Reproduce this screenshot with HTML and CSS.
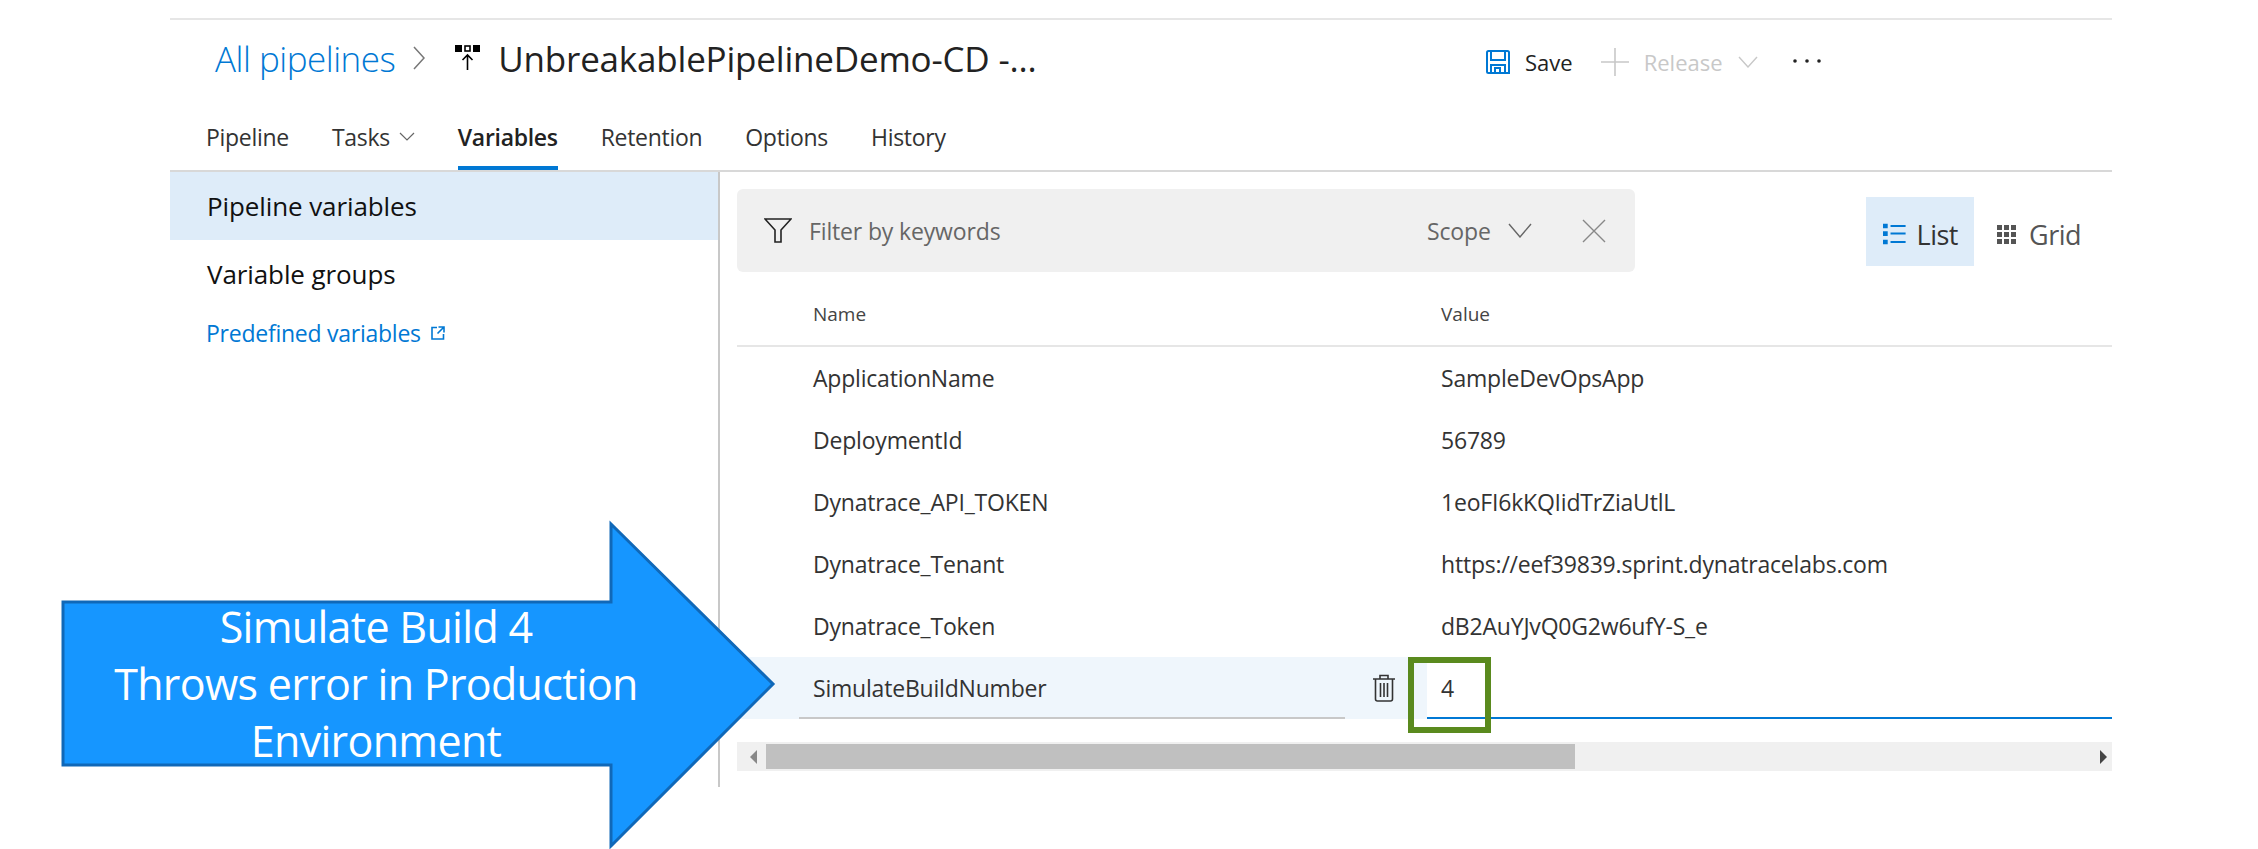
FILE: index.html
```html
<!DOCTYPE html>
<html lang="en">
<head>
    <meta charset="UTF-8">
    <title>UnbreakablePipelineDemo-CD - Variables</title>
    <link rel="stylesheet" href="styles.css">
</head>
<body>
    <div class="page">
        <header class="topbar">
            <div class="breadcrumb">
                <a class="crumb-link">All pipelines</a>
                <svg class="crumb-sep" width="12" height="24" viewBox="0 0 12 24"><path d="M1 1l10 11L1 23" fill="none" stroke="#777" stroke-width="1.5"/></svg>
                <svg class="pipe-icon" width="26" height="26" viewBox="0 0 26 26">
                    <rect x="0" y="0" width="7" height="7" fill="#000"/>
                    <rect x="10" y="1" width="5" height="5" fill="#fff" stroke="#000" stroke-width="1.6"/>
                    <rect x="18" y="0" width="7" height="7" fill="#000"/>
                    <path d="M12.5 25V10M7.5 15l5-5 5 5" fill="none" stroke="#000" stroke-width="1.6"/>
                </svg>
                <span class="crumb-title">UnbreakablePipelineDemo-CD -...</span>
            </div>
            <div class="actions">
                <button class="action">
                    <svg width="24" height="24" viewBox="0 0 24 24"><path d="M1 2.500A1.500 1.500 0 0 1 2.500 1h19A1.500 1.500 0 0 1 23 2.500V23H2.500A1.500 1.500 0 0 1 1 21.500zM5 1v9h14V1M5 23v-8h14v8M9 23v-5h5v5" fill="none" stroke="#0078d4" stroke-width="2"/></svg>
                    <span>Save</span>
                </button>
                <button class="action action-off">
                    <svg width="30" height="28" viewBox="0 0 30 28"><path d="M15 0v28M1 14h28" fill="none" stroke="#c8c8c8" stroke-width="1.6"/></svg>
                    <span>Release</span>
                    <svg class="chev" width="20" height="12" viewBox="0 0 20 12"><path d="M1 1l9 10 9-10" fill="none" stroke="#c8c8c8" stroke-width="1.4"/></svg>
                </button>
                <svg class="dots" width="28" height="4" viewBox="0 0 28 4"><circle cx="2" cy="2" r="1.800" fill="#222"/><circle cx="14" cy="2" r="1.800" fill="#222"/><circle cx="26" cy="2" r="1.800" fill="#222"/></svg>
            </div>
        </header>

        <nav class="tabs">
            <a class="tab">Pipeline</a>
            <a class="tab">Tasks
                <svg width="16" height="9" viewBox="0 0 16 9"><path d="M1 1l7 7 7-7" fill="none" stroke="#666" stroke-width="1.200"/></svg>
            </a>
            <a class="tab tab-active">Variables</a>
            <a class="tab">Retention</a>
            <a class="tab">Options</a>
            <a class="tab">History</a>
        </nav>

        <main class="content">
            <aside class="sidebar">
                <div class="side-item side-item-active">Pipeline variables</div>
                <div class="side-item">Variable groups</div>
                <a class="side-link">Predefined variables
                    <svg width="14" height="14" viewBox="0 0 14 14"><path d="M6 1.500H1v11.500h11.500V8M7.500 1h5.500v5.500M13 1L6.500 7.500" fill="none" stroke="#0078d4" stroke-width="1.600"/></svg>
                </a>
            </aside>

            <section class="panel">
                <div class="toolbar">
                    <div class="filter">
                        <svg class="filter-icon" width="28" height="25" viewBox="0 0 28 25"><path d="M1 1h26L17 12v12h-6V12z" fill="none" stroke="#222" stroke-width="1.600"/></svg>
                        <span class="filter-text">Filter by keywords</span>
                        <span class="filter-scope">Scope</span>
                        <svg class="filter-chev" width="24" height="15" viewBox="0 0 24 15"><path d="M1 1l11 13L23 1" fill="none" stroke="#666" stroke-width="1.400"/></svg>
                        <svg class="filter-x" width="24" height="24" viewBox="0 0 24 24"><path d="M1 1l22 22M23 1L1 23" fill="none" stroke="#888" stroke-width="1.400"/></svg>
                    </div>
                    <div class="views">
                        <button class="view view-active">
                            <svg width="24" height="22" viewBox="0 0 24 22">
                                <path d="M0 0h5v5H0zM0 8h5v5H0zM0 17h5v5H0z" fill="#0078d4"/>
                                <path d="M8 2.500h16M8 10.500h16M8 19.500h16" stroke="#0078d4" stroke-width="2"/>
                            </svg>
                            <span>List</span>
                        </button>
                        <button class="view">
                            <svg width="19" height="19" viewBox="0 0 19 19" fill="#555">
                                <path d="M0 0h5v5H0zM7 0h5v5H7zM14 0h5v5h-5zM0 7h5v5H0zM7 7h5v5H7zM14 7h5v5h-5zM0 14h5v5H0zM7 14h5v5H7zM14 14h5v5h-5z"/>
                            </svg>
                            <span>Grid</span>
                        </button>
                    </div>
                </div>

                <div class="grid-head">
                    <span class="col-name">Name</span>
                    <span>Value</span>
                </div>

                <div class="row"><span class="col-name">ApplicationName</span><span>SampleDevOpsApp</span></div>
                <div class="row"><span class="col-name">DeploymentId</span><span>56789</span></div>
                <div class="row"><span class="col-name">Dynatrace_API_TOKEN</span><span>1eoFI6kKQIidTrZiaUtlL</span></div>
                <div class="row"><span class="col-name">Dynatrace_Tenant</span><span>https://eef39839.sprint.dynatracelabs.com</span></div>
                <div class="row"><span class="col-name">Dynatrace_Token</span><span>dB2AuYJvQ0G2w6ufY-S_e</span></div>

                <div class="row-edit">
                    <div class="edit-name">
                        <div class="name-input">SimulateBuildNumber</div>
                        <svg class="trash" width="24" height="28" viewBox="0 0 24 28"><path d="M1 5h22M8 5V1.500h8V5M3.500 5v20a2 2 0 0 0 2 2h13a2 2 0 0 0 2-2V5M8.500 9v14M12 9v14M15.500 9v14" fill="none" stroke="#333" stroke-width="1.600"/></svg>
                    </div>
                    <div class="edit-value">4</div>
                </div>

                <div class="hscroll">
                    <svg class="hscroll-left" width="7" height="14" viewBox="0 0 7 14"><path d="M7 0v14L0 7z" fill="#888"/></svg>
                    <div class="hscroll-thumb"></div>
                    <svg class="hscroll-right" width="7" height="14" viewBox="0 0 7 14"><path d="M0 0v14l7-7z" fill="#444"/></svg>
                </div>
            </section>
        </main>
    </div>

    <!-- Annotations on top of the screenshot -->
    <div class="callout-box"></div>
    <div class="callout">
        <svg class="callout-arrow" width="716" height="332" viewBox="0 0 716 332">
            <path d="M2 84H550V6L712 166 550 328V247H2z" fill="#1696ff" stroke="#1068b8" stroke-width="3"/>
        </svg>
        <div class="callout-text">Simulate Build 4<br>Throws error in Production<br>Environment</div>
    </div>
</body>
</html>
```

FILE: styles.css
```css
* {
    box-sizing: border-box;
}
body {
    margin: 0;
    padding: 0;
    background-color: #fff;
    color: #333;
    font-family: "Open Sans", "Noto Sans", sans-serif;
    overflow: hidden;
}
button {
    border: none;
    background: none;
    padding: 0;
    font-family: inherit;
    font-size: inherit;
    letter-spacing: inherit;
    color: inherit;
}
.page {
    width: 1942px;
    margin: 18px 0 0 170px;
    border-top: 2px solid #e6e6e6;
}

/* header */
.topbar {
    display: flex;
    align-items: center;
    height: 84px;
    padding: 0 0 0 45px;
}
.breadcrumb {
    display: flex;
    align-items: center;
    width: 1271px;
    margin-top: -8px;
}
.crumb-link {
    font-size: 35px;
    font-weight: 300;
    letter-spacing: -0.5px;
    color: #0078d4;
}
.crumb-sep {
    margin-left: 18px;
}
.pipe-icon {
    margin-left: 30px;
}
.crumb-title {
    margin-left: 17px;
    font-size: 35px;
    letter-spacing: -0.2px;
    color: #222;
}
.actions {
    display: flex;
    align-items: center;
    font-size: 22px;
}
.action {
    display: flex;
    align-items: center;
    font-size: 22px;
    letter-spacing: 0;
    color: #222;
}
.action span {
    margin-left: 15px;
}
.action-off {
    margin-left: 27px;
    color: #c8c8c8;
}
.action-off span {
    margin-left: 14px;
}
.action-off .chev {
    margin-left: 15px;
}
.dots {
    margin-left: 35px;
    margin-top: -3px;
}

/* tabs */
.tabs {
    display: flex;
    height: 66px;
    padding-left: 36px;
    gap: 43px;
    font-size: 23px;
    letter-spacing: -0.3px;
}
.tab {
    display: flex;
    align-items: center;
    gap: 9px;
    height: 66px;
    padding-top: 3px;
    border-bottom: 4px solid transparent;
    color: #333;
}
.tab-active {
    font-weight: 600;
    color: #222;
    border-bottom-color: #0078d4;
}

/* main area */
.content {
    display: flex;
    height: 617px;
    border-top: 2px solid #d8d8d8;
}
.sidebar {
    width: 550px;
    border-right: 2px solid #c8c8c8;
}
.side-item {
    display: flex;
    align-items: center;
    height: 68px;
    padding-left: 37px;
    font-size: 26px;
    letter-spacing: -0.1px;
    color: #111;
}
.side-item-active {
    background-color: #deecf9;
}
.side-link {
    display: flex;
    align-items: center;
    gap: 10px;
    height: 48px;
    margin-top: 1px;
    padding-left: 36px;
    font-size: 23px;
    letter-spacing: -0.25px;
    color: #0078d4;
}
.panel {
    width: 1392px;
    padding: 17px 0 0 17px;
}
.toolbar {
    display: flex;
    align-items: center;
    height: 83px;
}
.filter {
    display: flex;
    align-items: center;
    width: 898px;
    height: 83px;
    padding-left: 27px;
    background-color: #f0f0f0;
    border-radius: 6px;
    font-size: 23px;
    letter-spacing: -0.15px;
    color: #666;
}
.filter-text {
    width: 618px;
    margin-left: 17px;
}
.filter-chev {
    margin-left: 17px;
}
.filter-x {
    margin-left: 50px;
}
.views {
    display: flex;
    align-items: center;
    margin: 2px 0 0 231px;
    font-size: 27px;
    letter-spacing: -0.5px;
    color: #555;
}
.view {
    display: flex;
    align-items: center;
    gap: 11px;
    height: 69px;
    padding: 5px 16px 0 17px;
}
.view-active {
    width: 108px;
    background-color: #deecf9;
    color: #333;
}
.view:not(.view-active) {
    margin-left: 6px;
    gap: 13px;
}
.grid-head {
    display: flex;
    align-items: center;
    height: 75px;
    padding: 11px 0 0 76px;
    border-bottom: 2px solid #e6e6e6;
    font-size: 19px;
    color: #444;
}
.col-name {
    width: 628px;
}
.row {
    display: flex;
    align-items: center;
    height: 62px;
    padding-left: 76px;
    font-size: 23px;
    letter-spacing: -0.2px;
    color: #333;
}
.row-edit {
    display: flex;
    height: 62px;
    font-size: 23px;
    letter-spacing: -0.2px;
}
.edit-name {
    display: flex;
    align-items: center;
    width: 690px;
    padding-left: 62px;
    background-color: #eff6fc;
}
.name-input {
    display: flex;
    align-items: center;
    width: 546px;
    height: 62px;
    padding: 1px 0 0 14px;
    border-bottom: 2px solid #c8c8c8;
}
.trash {
    margin-left: 27px;
}
.edit-value {
    display: flex;
    align-items: center;
    width: 685px;
    padding: 1px 0 0 14px;
    border-bottom: 2px solid #0078d4;
}
.hscroll {
    display: flex;
    align-items: center;
    height: 29px;
    margin-top: 23px;
    padding-left: 13px;
    background-color: #f0f0f0;
}
.hscroll-thumb {
    width: 809px;
    height: 25px;
    margin-left: 9px;
    background-color: #c0c0c0;
}
.hscroll-right {
    margin-left: 525px;
}

/* annotations */
.callout-box {
    position: absolute;
    left: 1408px;
    top: 657px;
    width: 83px;
    height: 76px;
    border: 6px solid #5a8a1e;
}
.callout {
    position: absolute;
    left: 61px;
    top: 518px;
    width: 716px;
    height: 332px;
}
.callout-arrow {
    display: block;
}
.callout-text {
    position: absolute;
    left: 0;
    top: 80px;
    width: 630px;
    text-align: center;
    font-size: 43px;
    line-height: 57px;
    letter-spacing: -0.7px;
    color: #fff;
}
```
